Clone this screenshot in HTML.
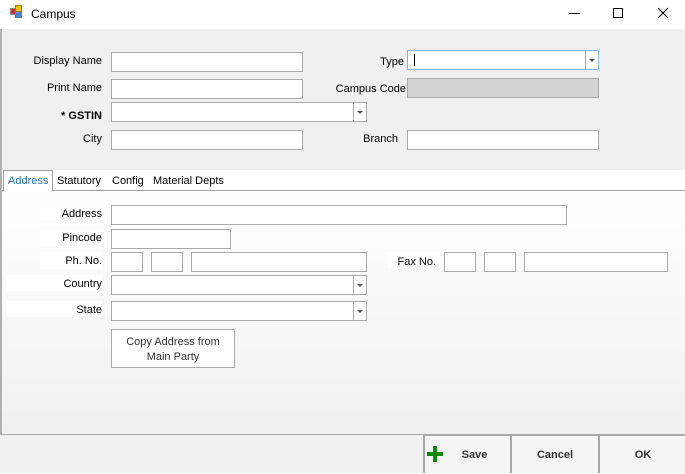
<!DOCTYPE html>
<html><head><style>
*{box-sizing:border-box;margin:0;padding:0}
body{width:685px;height:473px;position:relative;overflow:hidden;font-family:"Liberation Sans",sans-serif;font-size:11px;color:#000;background:#fff}
.a{position:absolute}
.tb{background:#fff;border:1px solid #a9a9a9}
.lbl{position:absolute;text-align:right}
.wl{background:#fff;position:absolute}
.dd{position:absolute;right:0;top:0;bottom:0;width:13px;border-left:1px solid #a9a9a9}
.dd:after{content:"";position:absolute;left:3px;top:8px;border-left:3px solid transparent;border-right:3px solid transparent;border-top:3px solid #555}
.btn{position:absolute;top:434px;height:39px;border:2px solid #a8a8a8;border-bottom:none;background:#f5f5f5;font-weight:bold;font-size:11px;color:#333;text-align:center;line-height:38px}
</style></head><body>
<div class="a" style="left:0;top:0;width:685px;height:29px;background:#fff"></div>
<div class="a" style="left:10px;top:8px;width:7px;height:7px;background:#d03030;border:1px solid #888"></div>
<div class="a" style="left:15px;top:5px;width:7px;height:7px;background:#f5c400;border:1px solid #a08000"></div>
<div class="a" style="left:15px;top:12px;width:7px;height:6px;background:#4a80d0"></div>
<div class="a" style="left:31px;top:7px;font-size:12px">Campus</div>
<div class="a" style="left:569px;top:13px;width:11px;height:1px;background:#000"></div>
<div class="a" style="left:613px;top:8px;width:10px;height:10px;border:1px solid #000"></div>
<svg class="a" style="left:657px;top:7px" width="12" height="12"><path d="M1 1L11 11M11 1L1 11" stroke="#000" stroke-width="1.1"/></svg>
<div class="a" style="left:0;top:29px;width:685px;height:141px;background:#f0f0f0"></div>
<div class="a" style="left:0;top:191px;width:685px;height:243px;background:linear-gradient(#fff,#f0f0f0)"></div>
<div class="a" style="left:0;top:190px;width:685px;height:1px;background:#a0a0a0"></div>
<div class="a" style="left:0;top:29px;width:2px;height:444px;background:#b0b0b0"></div>

<div class="lbl" style="left:10px;width:92px;top:55px">Display Name</div>
<div class="tb a" style="left:111px;top:52px;width:192px;height:20px"></div>
<div class="lbl" style="left:10px;width:92px;top:82px">Print Name</div>
<div class="tb a" style="left:111px;top:79px;width:192px;height:20px"></div>
<div class="lbl" style="left:10px;width:92px;top:110px;font-weight:bold">* GSTIN</div>
<div class="tb a" style="left:111px;top:102px;width:256px;height:20px"><div class="dd"></div></div>
<div class="lbl" style="left:10px;width:92px;top:133px">City</div>
<div class="tb a" style="left:111px;top:130px;width:192px;height:20px"></div>

<div class="lbl" style="left:330px;width:74px;top:56px">Type</div>
<div class="tb a" style="left:407px;top:50px;width:192px;height:20px;border-color:#7eb4ea"><div class="a" style="left:6px;top:3px;width:1px;height:12px;background:#000"></div><div class="dd" style="border-color:#a9a9a9"></div></div>
<div class="lbl" style="left:330px;width:76px;top:83px">Campus Code</div>
<div class="a" style="left:407px;top:78px;width:192px;height:20px;background:#d3d3d3;border:1px solid #a9a9a9"></div>
<div class="lbl" style="left:330px;width:68px;top:133px">Branch</div>
<div class="tb a" style="left:407px;top:130px;width:192px;height:20px"></div>

<div class="a" style="left:3px;top:170px;width:50px;height:21px;background:#fff;border:1px solid #a0a0a0;border-bottom:none"></div>
<div class="a" style="left:8px;top:175px;color:#1f6fbf">Address</div>
<div class="a" style="left:57px;top:175px">Statutory</div>
<div class="a" style="left:112px;top:175px">Config</div>
<div class="a" style="left:153px;top:175px">Material Depts</div>

<div class="wl" style="left:40px;top:203px;width:63px;height:17px"></div>
<div class="lbl" style="left:40px;width:62px;top:208px">Address</div>
<div class="tb a" style="left:111px;top:205px;width:456px;height:20px"></div>
<div class="wl" style="left:40px;top:229px;width:63px;height:17px"></div>
<div class="lbl" style="left:40px;width:62px;top:232px">Pincode</div>
<div class="tb a" style="left:111px;top:229px;width:120px;height:20px"></div>
<div class="wl" style="left:40px;top:252px;width:63px;height:17px"></div>
<div class="lbl" style="left:40px;width:62px;top:255px">Ph. No.</div>
<div class="tb a" style="left:111px;top:252px;width:32px;height:20px"></div>
<div class="tb a" style="left:151px;top:252px;width:32px;height:20px"></div>
<div class="tb a" style="left:191px;top:252px;width:176px;height:20px"></div>
<div class="wl" style="left:7px;top:275px;width:96px;height:16px"></div>
<div class="lbl" style="left:7px;width:95px;top:278px">Country</div>
<div class="tb a" style="left:111px;top:275px;width:256px;height:20px"><div class="dd"></div></div>
<div class="wl" style="left:7px;top:301px;width:96px;height:16px"></div>
<div class="lbl" style="left:7px;width:95px;top:304px">State</div>
<div class="tb a" style="left:111px;top:301px;width:256px;height:20px"><div class="dd"></div></div>
<div class="a" style="left:111px;top:329px;width:124px;height:39px;background:#fff;border:1px solid #a9a9a9;text-align:center;line-height:15px;padding-top:5px;color:#333">Copy Address from<br>Main Party</div>

<div class="wl" style="left:388px;top:252px;width:52px;height:16px"></div>
<div class="lbl" style="left:388px;width:48px;top:256px">Fax No.</div>
<div class="tb a" style="left:444px;top:252px;width:32px;height:20px"></div>
<div class="tb a" style="left:484px;top:252px;width:32px;height:20px"></div>
<div class="tb a" style="left:524px;top:252px;width:144px;height:20px"></div>

<div class="a" style="left:0;top:434px;width:685px;height:39px;background:#f0f0f0;border-top:1px solid #a8a8a8"></div>
<div class="btn" style="left:423px;width:89px;padding-left:14px">Save</div>
<div class="a" style="left:427px;top:452px;width:16px;height:4px;background:#0a8a0a"></div>
<div class="a" style="left:433px;top:446px;width:4px;height:16px;background:#0a8a0a"></div>
<div class="btn" style="left:510px;width:90px">Cancel</div>
<div class="btn" style="left:598px;width:90px">OK</div>
</body></html>
